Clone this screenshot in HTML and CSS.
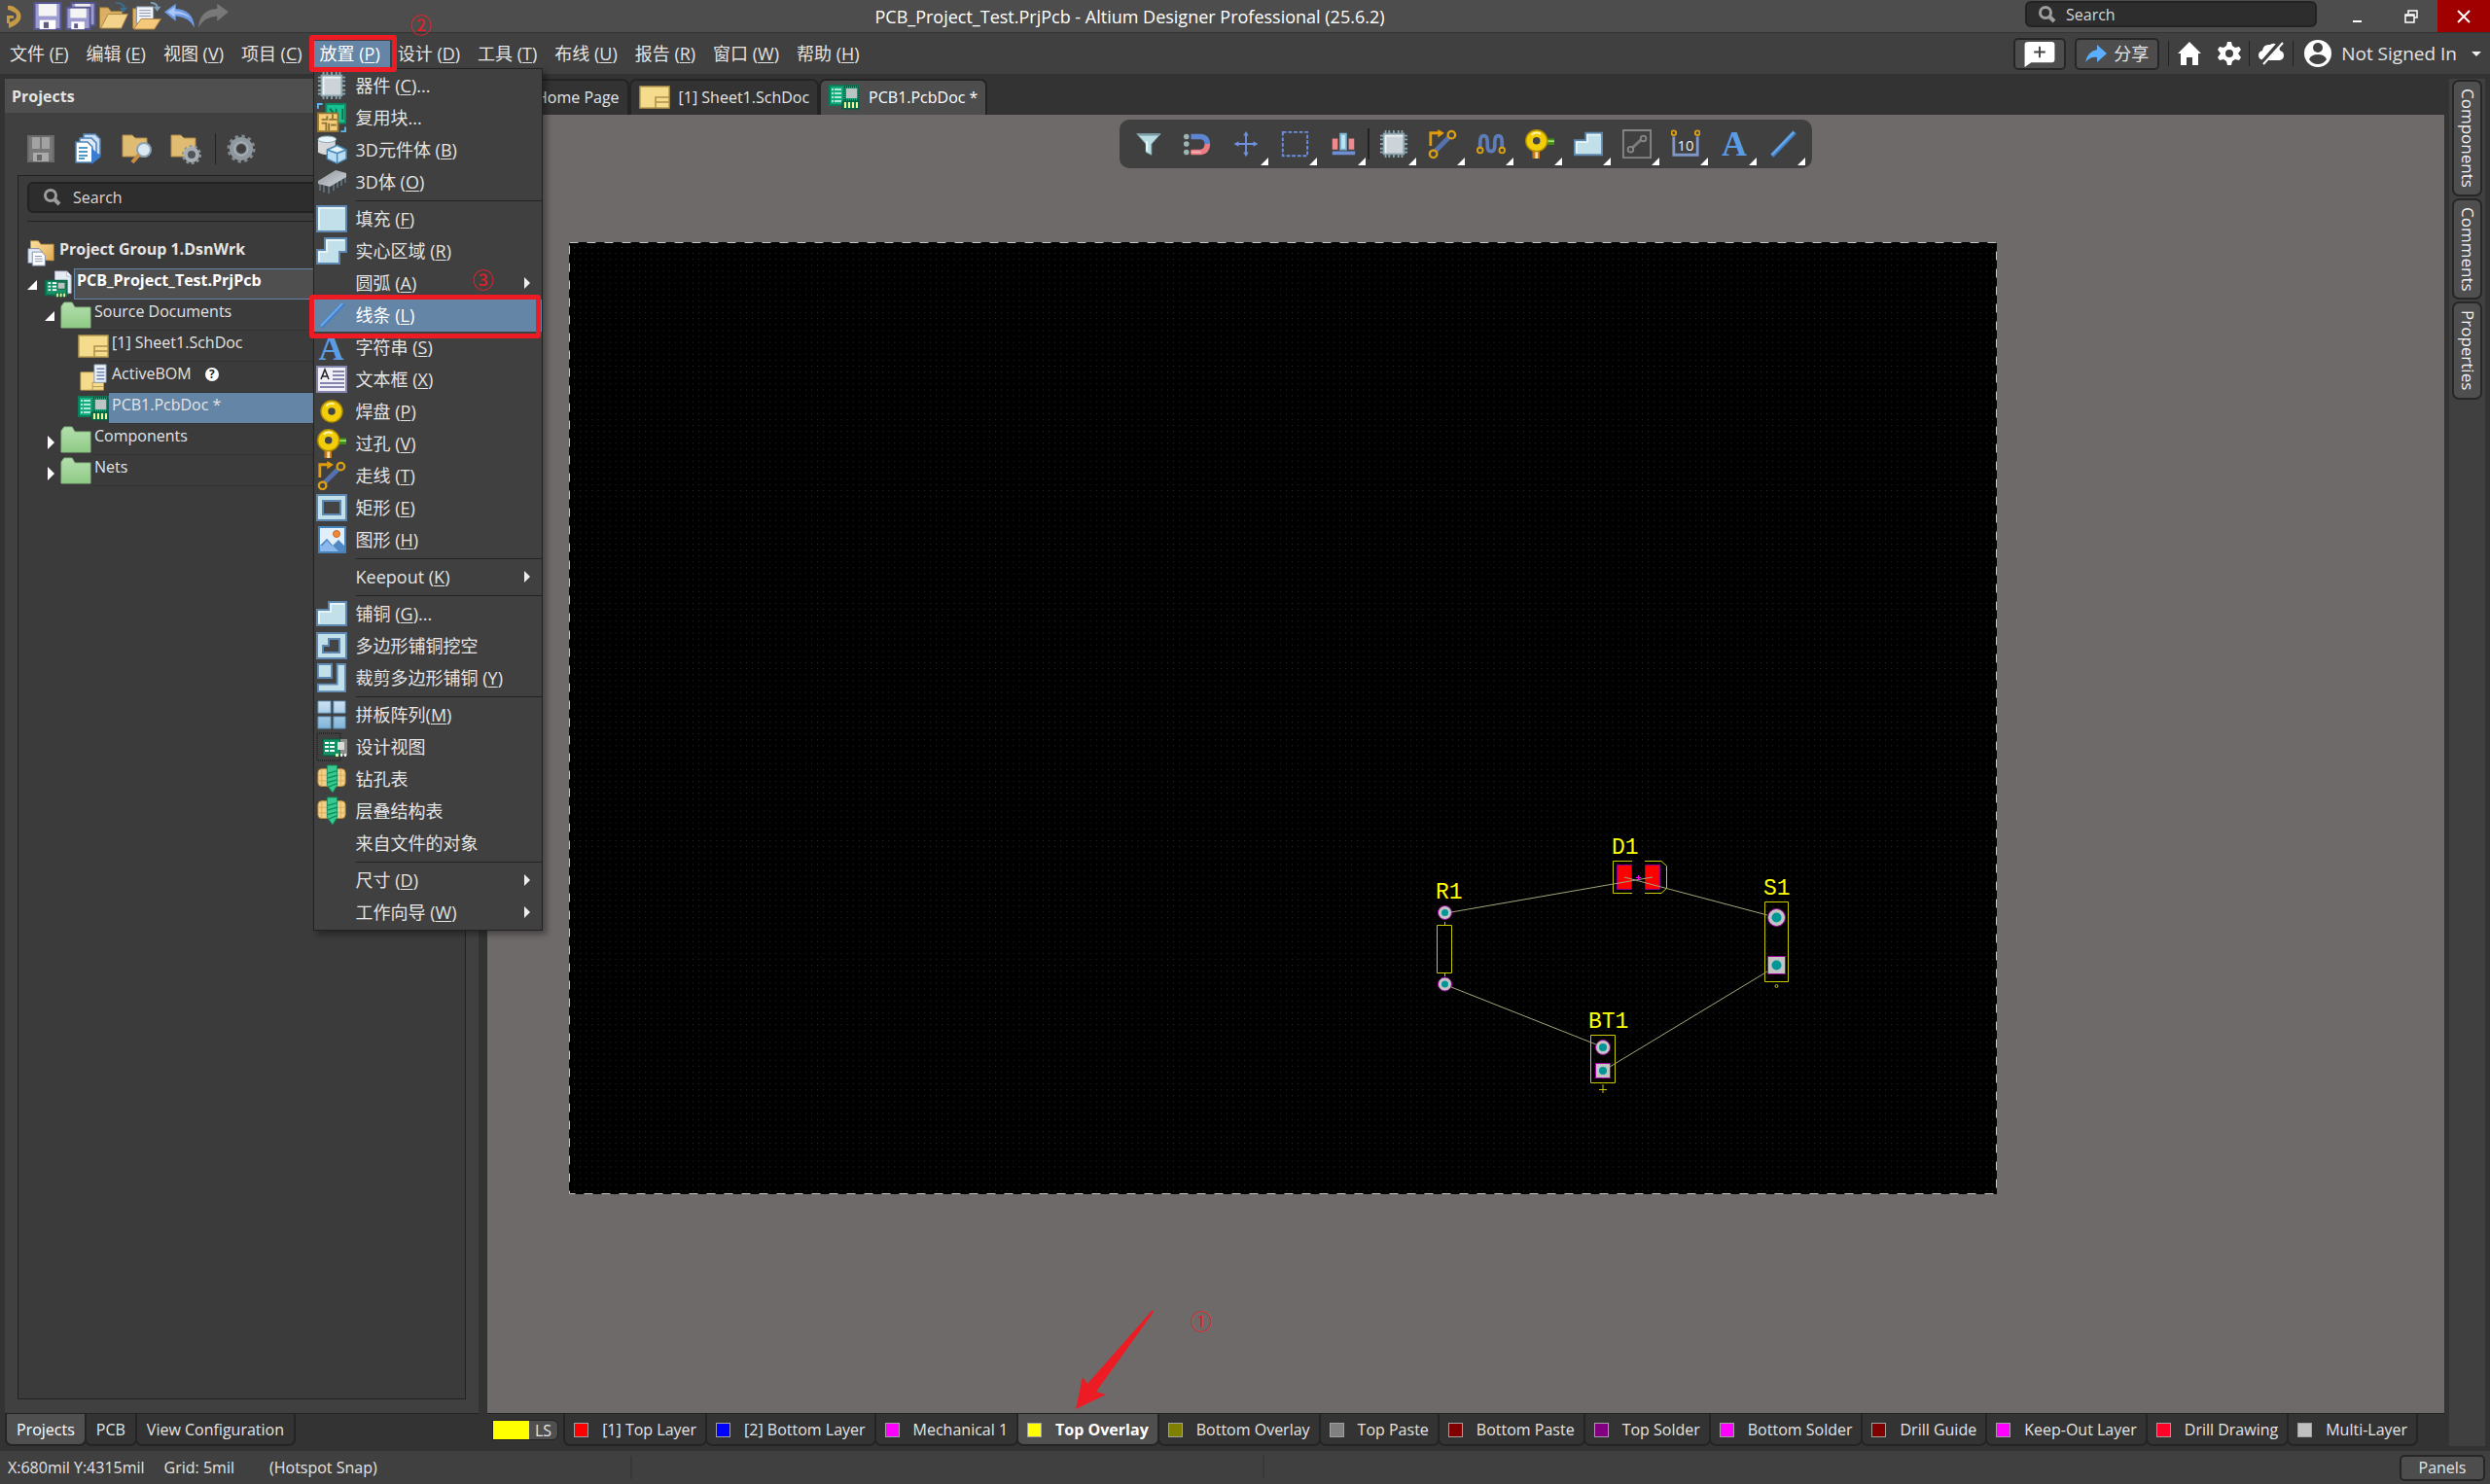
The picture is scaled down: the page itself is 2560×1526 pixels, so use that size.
FILE: index.html
```html
<!DOCTYPE html>
<html lang="zh-CN">
<head>
<meta charset="utf-8">
<title>PCB_Project_Test.PrjPcb - Altium Designer Professional (25.6.2)</title>
<link rel="stylesheet" href="styles.css">
</head>
<body>
<svg class="sprite" aria-hidden="true">
  <defs>
    <linearGradient id="gold" x1="0" y1="0" x2="1" y2="1"><stop offset="0" stop-color="#fbe3a4"/><stop offset="1" stop-color="#e0a84e"/></linearGradient>
    <linearGradient id="green" x1="0" y1="0" x2="0" y2="1"><stop offset="0" stop-color="#b4dfae"/><stop offset="1" stop-color="#8fcb85"/></linearGradient>
    <linearGradient id="sky" x1="0" y1="0" x2="0" y2="1"><stop offset="0" stop-color="#cfe2f2"/><stop offset="1" stop-color="#7fb4d8"/></linearGradient>
    <linearGradient id="steel" x1="0" y1="0" x2="1" y2="1"><stop offset="0" stop-color="#8d949b"/><stop offset="1" stop-color="#d3d8dc"/></linearGradient>
  </defs>
  <symbol id="i-logo" viewBox="0 0 16 26"><path d="M1 2 Q6 1 10 5 Q16 9 14 16 Q11 22 2 25 V19 Q9 17 10 13 Q10 9 6 8 Q3 6 1 6Z" fill="#c59a45"/><path d="M0 12h7v3H3v5H0z" fill="#c59a45"/></symbol>
  <symbol id="i-floppy" viewBox="0 0 28 28"><path d="M1 1h26v26H1z" fill="#9d9cd0" stroke="#56558f" stroke-width="2"/><path d="M5 2h18v12H5z" fill="#f4f4f4"/><path d="M6 18h16v9H6z" fill="#fff"/><path d="M10 20h5v6h-5z" fill="#5b5b86"/></symbol>
  <symbol id="i-floppy2" viewBox="0 0 32 30"><path d="M6 1h25v24H6z" fill="#9d9cd0" stroke="#56558f" stroke-width="2"/><path d="M10 2h16v4H10z" fill="#eee"/><path d="M1 6h25v23H1z" fill="#9d9cd0" stroke="#56558f" stroke-width="2"/><path d="M5 7h17v10H5z" fill="#f4f4f4"/><path d="M6 21h14v8H6z" fill="#fff"/><path d="M9 23h4v5H9z" fill="#5b5b86"/></symbol>
  <symbol id="i-open" viewBox="0 0 32 30"><path d="M1 28V6h9l3 4h12v6" fill="#d9b064" stroke="#9c7837"/><path d="M2 28 L10 13 H31 L24 28Z" fill="#f3d28b" stroke="#a98545"/><path d="M18 1 Q27 1 27 7" fill="none" stroke="#3d6d8f" stroke-width="2"/><path d="M22 6h9l-5 5z" fill="#3d6d8f"/></symbol>
  <symbol id="i-opendoc" viewBox="0 0 32 30"><path d="M1 28V7h7v21" fill="#d9b064" stroke="#9c7837"/><path d="M5 5h18v18H5z" fill="#f2f5fa" stroke="#7b89a5"/><path d="M8 9h12M8 12h12M8 15h12" stroke="#8592ad"/><path d="M2 29 L10 18 H31 L24 29Z" fill="#f6c87c" stroke="#a9803f"/><path d="M20 1 Q27 1 27 6" fill="none" stroke="#7da0b5" stroke-width="2"/><path d="M23 5h8l-4 5z" fill="#7da0b5"/></symbol>
  <symbol id="i-undo" viewBox="0 0 30 24"><path d="M0 8 L11 0 V5 Q28 6 29 23 Q24 13 11 12 V17Z" fill="#6f9be4"/><path d="M3 8 L10 3 V7 Q21 8 25 14 Q19 10 10 10 V13Z" fill="#a9c6f5"/></symbol>
  <symbol id="i-redo" viewBox="0 0 30 24"><path d="M30 8 L19 0 V5 Q2 6 1 23 Q6 13 19 12 V17Z" fill="#787878"/></symbol>
  <symbol id="i-floppyoff" viewBox="0 0 28 28"><path d="M1 1h26v26H1z" fill="#787878" stroke="#6a6a6a" stroke-width="2"/><path d="M5 2h18v12H5z" fill="#a2a2a2"/><path d="M13 2h2v12h-2z" fill="#777"/><path d="M6 18h16v9H6z" fill="#aaa"/><path d="M10 20h5v6h-5z" fill="#666"/></symbol>
  <symbol id="i-docs" viewBox="0 0 28 32"><path d="M9 1h12l5 5v16H9z" fill="#c9dcf0" stroke="#4f83b5" stroke-width="1.5"/><path d="M5 5h12l5 5v16H5z" fill="#dfeaf6" stroke="#4f83b5" stroke-width="1.5"/><path d="M1 9h12l5 5v16H1z" fill="#fff" stroke="#4f83b5" stroke-width="1.5"/><path d="M4 15h9M4 19h9M4 23h9M4 26h6" stroke="#4e9ac9" stroke-width="2"/><path d="M17 15 L27 24 L17 32Z" fill="#3a7dd0"/></symbol>
  <symbol id="i-folder-find" viewBox="0 0 32 32"><path d="M1 24V2h10l3 3h12v19z" fill="#e0bb72" stroke="#b08b49"/><circle cx="23" cy="17" r="7" fill="#dbe9f3" stroke="#8ba2b5" stroke-width="2"/><path d="M18 22 L11 30" stroke="#c68f45" stroke-width="4"/></symbol>
  <symbol id="i-folder-gear" viewBox="0 0 32 32"><path d="M1 24V2h10l3 3h12v19z" fill="#e0bb72" stroke="#b08b49"/><circle cx="22" cy="22" r="9" fill="none" stroke="#8e979d" stroke-width="2" stroke-dasharray="3 2.65"/><circle cx="22" cy="22" r="6" fill="#505559" stroke="#a6afb5" stroke-width="4"/></symbol>
  <symbol id="i-gear" viewBox="0 0 32 32"><circle cx="16" cy="16" r="13" fill="none" stroke="#7f898f" stroke-width="3" stroke-dasharray="3.4 3.4"/><circle cx="16" cy="16" r="8.500" fill="#3f3f3f" stroke="#8e989e" stroke-width="7"/><circle cx="16" cy="16" r="7" fill="none" stroke="#b3bdc3" stroke-width="1"/></symbol>
  <symbol id="i-search" viewBox="0 0 18 18"><circle cx="7" cy="7" r="5.500" fill="none" stroke="#9d9d9d" stroke-width="3"/><path d="M11 11 L16 16" stroke="#9d9d9d" stroke-width="4"/></symbol>
  <symbol id="i-group" viewBox="0 0 32 32"><path d="M4 24V2h9l3 4h15v19z" fill="url(#gold)" stroke="#c08f44"/><path d="M1 11h13l3 3v14H1z" fill="#e4ebf5" stroke="#7387a8"/><path d="M6 15h11l4 4v12H6z" fill="#fff" stroke="#7387a8"/><path d="M9 20h8M9 23h9M9 26h9" stroke="#7387a8"/></symbol>
  <symbol id="i-prj" viewBox="0 0 32 32"><path d="M12 1h14l5 5v21H12z" fill="#e6eaf4" stroke="#a9b1c6"/><path d="M26 1v6h5" fill="#fff" stroke="#a9b1c6"/><path d="M1 12h25v17H1z" fill="#19946a" stroke="#0d6a4a" stroke-width="2"/><path d="M4 15h3M4 19h3M4 23h3M9 15h5M9 19h5M9 23h5" stroke="#fff" stroke-width="2"/><path d="M15 14h9v8h-9z" fill="#b9c4c2" stroke="#0c5b40"/><path d="M12 26h14v5H12z" fill="#0f7a54"/><path d="M15 27v4M19 27v4M23 27v4" stroke="#f5f39a" stroke-width="2"/></symbol>
  <symbol id="i-folder" viewBox="0 0 32 28"><path d="M1 27V5 L4 1h8l3 5h16v21z" fill="url(#green)" stroke="#87ba80"/></symbol>
  <symbol id="i-sch" viewBox="0 0 32 24"><path d="M1 1h30v22H1z" fill="#f5dc8c" stroke="#b89a52" stroke-width="1.500"/><path d="M17 23V12h14M17 17h14" fill="none" stroke="#b08f4b" stroke-width="1.500"/></symbol>
  <symbol id="i-bom" viewBox="0 0 32 32"><path d="M1 10h27v21H1z" fill="#f5dc8c" stroke="#b89a52"/><path d="M15 31V22h13M15 27h13" fill="none" stroke="#b08f4b"/><path d="M17 1h14v21H17z" fill="#eaf1fa" stroke="#7f93b1"/><path d="M20 6h9M20 10h9M20 14h9M20 18h9" stroke="#6e86ab" stroke-width="1.500"/></symbol>
  <symbol id="i-pcb" viewBox="0 0 32 26"><path d="M1 1h30v20H1z" fill="#14ad80" stroke="#0c7c59" stroke-width="2"/><path d="M3 5h2M3 9h2M3 13h2M3 17h2M6 5h7M6 9h7M6 13h7M6 17h7" stroke="#d9fff0" stroke-width="1.500"/><path d="M16 2h15v14H16z" fill="none" stroke="#07593f" stroke-width="3" stroke-dasharray="1 1"/><path d="M18 4h11v10H18z" fill="#bac5c4"/><path d="M14 17h17v8H14z" fill="#087a54" stroke="#05543a"/><path d="M17 18v6M21 18v6M25 18v6M29 18v6" stroke="#f6f29b" stroke-width="2"/></symbol>
  <symbol id="i-chip" viewBox="0 0 32 32"><path d="M7 1v30M11 1v30M16 1v30M21 1v30M25 1v30M1 7h30M1 11h30M1 16h30M1 21h30M1 25h30" stroke="#8aa4ae" stroke-width="2"/><path d="M5 5h22v22H5z" fill="#ccd4da" stroke="#8aa4ae" stroke-width="2"/><path d="M7 26V7h19" fill="none" stroke="#eef2f4" stroke-width="2"/></symbol>
  <symbol id="i-reuse" viewBox="0 0 32 32"><path d="M10 1h21v21H10z" fill="#15c191" stroke="#0c8a62" stroke-width="2"/><path d="M14 6l4 5v6M21 6v9M28 6v12" stroke="#0a6d4d" stroke-width="2" fill="none"/><path d="M1 6V1h5M26 31h5v-5" fill="none" stroke="#5db7ee" stroke-width="2"/><path d="M1 11h22v20H1z" fill="#f4cc7a" stroke="#8f7434" stroke-width="2"/><path d="M5 18h6v-4M5 22h5v8M13 18h9M13 22v8M15 24h6M17 12v5" fill="none" stroke="#8f7434" stroke-width="2"/></symbol>
  <symbol id="i-body3d" viewBox="0 0 32 32"><path d="M1 4v15q9 5 19 0V4z" fill="#d8d8da"/><ellipse cx="11" cy="4.500" rx="10" ry="3.500" fill="#e9f5fa" stroke="#7fa3b5"/><path d="M11 16 L22 11 L32 16 V26 L22 31 L11 26Z" fill="#b8dcf2" stroke="#4a86b0" stroke-width="1.500"/><path d="M11 16 L22 20 L32 16 M22 20V31" fill="none" stroke="#4a86b0" stroke-width="1.500"/><path d="M14 16l8-3 7 3-7 2z" fill="#e6f4fc"/></symbol>
  <symbol id="i-ic3d" viewBox="0 0 32 28"><path d="M4 16v7M8 18v7M13 19v7M18 16v7M22 13v7M26 11v7M30 7v8" stroke="#5c6b78" stroke-width="2"/><path d="M2 13 L20 2 L31 5 V9 L14 19 L2 16Z" fill="url(#steel)"/></symbol>
  <symbol id="i-fill" viewBox="0 0 32 28"><path d="M1 1h30v26H1z" fill="#c2e0ea" stroke="#5d87ae" stroke-width="2"/><path d="M3 25V3h26" fill="none" stroke="#e6f4f8" stroke-width="2"/></symbol>
  <symbol id="i-region" viewBox="0 0 32 28"><path d="M9 1h22v14h-7v12H1V13h8z" fill="#c2e0ea" stroke="#5d87ae" stroke-width="2"/><path d="M3 25V15h8V3h18" fill="none" stroke="#e6f4f8" stroke-width="2"/></symbol>
  <symbol id="i-line" viewBox="0 0 32 32"><path d="M4 29 L29 3" stroke="#3f7fc7" stroke-width="5"/><path d="M4 28 L28 3" stroke="#6ba6ea" stroke-width="2.500"/></symbol>
  <symbol id="i-textbox" viewBox="0 0 32 28"><path d="M1 1h30v26H1z" fill="#f0f0f6" stroke="#8586ae" stroke-width="2"/><path d="M5 14 L9 4 L13 14M6 11h6" fill="none" stroke="#222" stroke-width="1.500"/><path d="M17 6h12M17 10h12M17 14h12M4 18h25M4 22h25" stroke="#8586ae" stroke-width="2"/></symbol>
  <symbol id="i-pad" viewBox="0 0 32 32"><circle cx="16" cy="16" r="8" fill="none" stroke="#b08c00" stroke-width="9"/><circle cx="16" cy="16" r="7.500" fill="#444" stroke="#f1cd0a" stroke-width="7"/><path d="M10 10q4-4 9-2" stroke="#fff3b0" stroke-width="2" fill="none"/></symbol>
  <symbol id="i-via" viewBox="0 0 32 32"><path d="M20 10h12v7H20z" fill="#3e8f11"/><path d="M20 12h12v2H20z" fill="#9bdf6e"/><path d="M8 20h8v12H8z" fill="#c87716"/><path d="M11 20h3v12h-3z" fill="#ffdda4"/><circle cx="12.500" cy="12.500" r="8" fill="none" stroke="#b08c00" stroke-width="9"/><circle cx="12.500" cy="12.500" r="7.500" fill="#444" stroke="#f1cd0a" stroke-width="7"/><path d="M7 6q5-4 10-1" stroke="#fff3b0" stroke-width="2" fill="none"/></symbol>
  <symbol id="i-track" viewBox="0 0 32 32"><path d="M8 24 L24 8" stroke="#5572ad" stroke-width="5"/><path d="M3 18V4h11" fill="none" stroke="#e29c0a" stroke-width="3"/><path d="M11 0v9l7-5z" fill="#e29c0a"/><circle cx="26" cy="6" r="4" fill="#444" stroke="#dba012" stroke-width="2.500"/><circle cx="6" cy="27" r="4" fill="#444" stroke="#dba012" stroke-width="2.500"/></symbol>
  <symbol id="i-rect" viewBox="0 0 32 28"><path d="M1 1h30v26H1z" fill="#c2e0ea" stroke="#5d87ae" stroke-width="2"/><path d="M7 7h18v14H7z" fill="#444" stroke="#5d87ae" stroke-width="2"/></symbol>
  <symbol id="i-image" viewBox="0 0 32 30"><path d="M3 2h27v26H3z" fill="#e2effa" stroke="#4683bd" stroke-width="2"/><circle cx="21" cy="9" r="3.500" fill="#f08a3a" stroke="#c9662a"/><path d="M4 27V21l7-7 12 13z" fill="#8cb8ec"/><path d="M4 21l7-7 6 7 6-6 6 6v6H23l-6-6" fill="#4f88c2"/><path d="M4 24l7-8 11 11H4z" fill="#8cb8ec"/></symbol>
  <symbol id="i-pour" viewBox="0 0 32 26"><path d="M13 1h18v24H1V9h12z" fill="#c2e0ea" stroke="#5d87ae" stroke-width="2"/><path d="M3 23V11h12V3h14" fill="none" stroke="#e6f4f8" stroke-width="2"/></symbol>
  <symbol id="i-cutout" viewBox="0 0 32 28"><path d="M1 1h30v26H1z" fill="#c2e0ea" stroke="#5d87ae" stroke-width="2"/><path d="M13 7h11v14H7v-7h6z" fill="#444" stroke="#5d87ae" stroke-width="2"/></symbol>
  <symbol id="i-slice" viewBox="0 0 32 32"><path d="M1 1h15v15H1zM22 1h9v30H1v-8h21z" fill="#c2e0ea" stroke="#5d87ae" stroke-width="2"/></symbol>
  <symbol id="i-array" viewBox="0 0 32 32"><path d="M1 1h14v13H1zM18 1h13v13H18zM1 18h14v13H1zM18 18h13v13H18z" fill="url(#sky)" stroke="#5d8fb8"/></symbol>
  <symbol id="i-dview" viewBox="0 0 32 30"><path d="M1 1h24v28H1z" fill="none" stroke="#111" stroke-dasharray="1 1"/><path d="M7 7h18v17H7z" fill="#129264" stroke="#07593f"/><path d="M25 7h7v17h-7z" fill="#8c8c8c"/><path d="M9 11h4M9 15h4M9 19h4M14 11h5M14 15h5M14 19h5" stroke="#fff" stroke-width="2"/><path d="M22 10h7v8h-7z" fill="#dadada"/><path d="M20 22h3v3h-3z" fill="#ef8"/><path d="M25 22h2v3h-2zM29 22h2v3h-2z" fill="#eee"/></symbol>
  <symbol id="i-drill" viewBox="0 0 32 32"><rect x="1" y="5" width="30" height="19" rx="4" fill="#f0cf8c" stroke="#c28d32"/><path d="M5 5v19M1 12h30M1 18h30M26 5v19" stroke="#d9ae5e"/><path d="M11 1h11v22l-5 8-6-8z" fill="#37c990" stroke="#108a5b"/><path d="M11 10l11-3M11 15l11-3M11 20l11-3M12 25l10-4" stroke="#128c5e" stroke-width="1.500"/></symbol>
  <symbol id="i-filter" viewBox="0 0 32 32"><path d="M3 5h26L19 16v12l-6-3V16z" fill="#b9dde3" stroke="#7fa7b0"/><path d="M4 6h24" stroke="#7f9aa5" stroke-width="2"/><path d="M14 13v11" stroke="#effafc" stroke-width="2"/></symbol>
  <symbol id="i-magnet" viewBox="0 0 32 32"><path d="M9 8h11q7 1 7 8" fill="none" stroke="#5e84d4" stroke-width="6"/><path d="M9 25h11q7-1 7-9" fill="none" stroke="#ea7d83" stroke-width="6"/><path d="M9 25h11" stroke="#f8b0b2" stroke-width="2"/><circle cx="4" cy="8" r="3" fill="#9ab5b4"/><circle cx="4" cy="16" r="3" fill="#9ab5b4"/><circle cx="4" cy="25" r="3" fill="#9ab5b4"/></symbol>
  <symbol id="i-move" viewBox="0 0 32 32"><path d="M16 4v24M4 16h24" stroke="#6f90df" stroke-width="2"/><path d="M16 2l3 5h-6zM16 30l3-5h-6zM3 16l5-3v6zM29 16l-5-3v6z" fill="#6f90df"/></symbol>
  <symbol id="i-select" viewBox="0 0 32 32"><path d="M3 3h27v26H3z" fill="none" stroke="#6f90df" stroke-width="2" stroke-dasharray="4 2"/></symbol>
  <symbol id="i-align" viewBox="0 0 32 32"><path d="M4 10h6v12H4zM22 10h6v12h-6z" fill="#f0898c"/><path d="M13 5h6v17h-6z" fill="#bfe4f4" stroke="#7db7d4" stroke-width="2"/><path d="M4 26h25" stroke="#6d8fd2" stroke-width="4"/></symbol>
  <symbol id="i-meander" viewBox="0 0 32 32"><path d="M4 22V14q0-7 4-7t4 7v4q0 6 4 6t4-6v-4q0-7 4-7t4 7v8" fill="none" stroke="#5d7cb8" stroke-width="4"/><circle cx="4" cy="23" r="3" fill="#444" stroke="#dba012" stroke-width="2"/><circle cx="28" cy="23" r="3" fill="#444" stroke="#dba012" stroke-width="2"/></symbol>
  <symbol id="i-boxed" viewBox="0 0 32 32"><path d="M1 1h30v30H1z" fill="none" stroke="#858585" stroke-width="2"/><path d="M9 22 L22 10" stroke="#7a7a7a" stroke-width="3"/><circle cx="23" cy="10" r="3" fill="#444" stroke="#858585" stroke-width="2"/><circle cx="9" cy="22" r="3" fill="#444" stroke="#858585" stroke-width="2"/></symbol>
  <symbol id="i-comment" viewBox="0 0 32 28"><path d="M4 1h25q3 0 3 3v16q0 3-3 3H7l-7 5V4q0-3 4-3z" fill="#fff"/><path d="M16 6v12M10 12h12" stroke="#444" stroke-width="2"/></symbol>
  <symbol id="i-share" viewBox="0 0 22 18"><path d="M22 9 L12 0v5Q2 7 0 18q5-6 12-5v5z" fill="#5caeff"/></symbol>
  <symbol id="i-home" viewBox="0 0 24 24"><path d="M12 0 L24 12 H21 V24 H15 V16 H9 V24 H3 V12 H0Z" fill="#fff"/></symbol>
  <symbol id="i-cog" viewBox="0 0 24 24"><path d="M10 0h4l1 4 3 2 4-1 2 3-3 4 3 4-2 3-4-1-3 2-1 4h-4l-1-4-3-2-4 1-2-3 3-4-3-4 2-3 4 1 3-2z" fill="#fff"/><circle cx="12" cy="12" r="4" fill="#404040"/></symbol>
  <symbol id="i-cloud" viewBox="0 0 26 24"><path d="M5 19q-5-1-5-5 0-4 4-5 1-7 8-6 4-3 8 1 2 2 2 5 4 1 4 5t-4 5z" fill="#fff"/><path d="M3 23 L23 0" stroke="#404040" stroke-width="5"/><path d="M5 23 L25 1" stroke="#fff" stroke-width="2"/></symbol>
  <symbol id="i-user" viewBox="0 0 28 28"><circle cx="14" cy="14" r="14" fill="#fff"/><circle cx="14" cy="8" r="5" fill="#404040"/><path d="M5 20q2-5 9-5t9 5q-3 5-9 5t-9-5z" fill="#404040"/></symbol>
  <symbol id="i-restore" viewBox="0 0 14 14"><path d="M4 4V1h9v7h-3M1 5h9v8H1zM1 6h9" fill="none" stroke="#fff" stroke-width="1.500"/></symbol>
  <symbol id="i-close" viewBox="0 0 14 14"><path d="M1 1l12 12M13 1L1 13" stroke="#fff" stroke-width="2"/></symbol>
</svg>

<div class="app">
  <header class="titlebar">
    <div class="quick">
      <svg class="logo"><use href="#i-logo"/></svg>
      <button aria-label="Save"><svg><use href="#i-floppy"/></svg></button>
      <button aria-label="Save all"><svg><use href="#i-floppy2"/></svg></button>
      <button aria-label="Open"><svg><use href="#i-open"/></svg></button>
      <button aria-label="Open project"><svg><use href="#i-opendoc"/></svg></button>
      <button aria-label="Undo"><svg><use href="#i-undo"/></svg></button>
      <button aria-label="Redo"><svg><use href="#i-redo"/></svg></button>
    </div>
    <h1 class="title">PCB_Project_Test.PrjPcb - Altium Designer Professional (25.6.2)</h1>
    <label class="search search-top"><svg><use href="#i-search"/></svg><input type="search" placeholder="Search" aria-label="Search"></label>
    <div class="winbtns">
      <button aria-label="Minimize"><span class="min"></span></button>
      <button aria-label="Restore"><svg><use href="#i-restore"/></svg></button>
      <button class="close" aria-label="Close"><svg><use href="#i-close"/></svg></button>
    </div>
  </header>

  <nav class="menubar">
    <ul class="menus">
      <li><button>文件 (<u>F</u>)</button></li>
      <li><button>编辑 (<u>E</u>)</button></li>
      <li><button>视图 (<u>V</u>)</button></li>
      <li><button>项目 (<u>C</u>)</button></li>
      <li class="open"><button>放置 (<u>P</u>)</button>
        <ul class="popup">
          <li><button><svg><use href="#i-chip"/></svg>器件 (<u>C</u>)...</button></li>
          <li><button><svg><use href="#i-reuse"/></svg>复用块...</button></li>
          <li><button><svg><use href="#i-body3d"/></svg>3D元件体 (<u>B</u>)</button></li>
          <li><button><svg><use href="#i-ic3d"/></svg>3D体 (<u>O</u>)</button></li>
          <li class="rule"></li>
          <li><button><svg><use href="#i-fill"/></svg>填充 (<u>F</u>)</button></li>
          <li><button><svg><use href="#i-region"/></svg>实心区域 (<u>R</u>)</button></li>
          <li><button class="sub"><svg></svg>圆弧 (<u>A</u>)</button></li>
          <li><button class="hot"><svg><use href="#i-line"/></svg>线条 (<u>L</u>)</button></li>
          <li><button><span class="glyph-a">A</span>字符串 (<u>S</u>)</button></li>
          <li><button><svg><use href="#i-textbox"/></svg>文本框 (<u>X</u>)</button></li>
          <li><button><svg><use href="#i-pad"/></svg>焊盘 (<u>P</u>)</button></li>
          <li><button><svg><use href="#i-via"/></svg>过孔 (<u>V</u>)</button></li>
          <li><button><svg><use href="#i-track"/></svg>走线 (<u>T</u>)</button></li>
          <li><button><svg><use href="#i-rect"/></svg>矩形 (<u>E</u>)</button></li>
          <li><button><svg><use href="#i-image"/></svg>图形 (<u>H</u>)</button></li>
          <li class="rule"></li>
          <li><button class="sub"><svg></svg>Keepout (<u>K</u>)</button></li>
          <li class="rule"></li>
          <li><button><svg><use href="#i-pour"/></svg>铺铜 (<u>G</u>)...</button></li>
          <li><button><svg><use href="#i-cutout"/></svg>多边形铺铜挖空</button></li>
          <li><button><svg><use href="#i-slice"/></svg>裁剪多边形铺铜 (<u>Y</u>)</button></li>
          <li class="rule"></li>
          <li><button><svg><use href="#i-array"/></svg>拼板阵列(<u>M</u>)</button></li>
          <li><button><svg><use href="#i-dview"/></svg>设计视图</button></li>
          <li><button><svg><use href="#i-drill"/></svg>钻孔表</button></li>
          <li><button><svg><use href="#i-drill"/></svg>层叠结构表</button></li>
          <li><button><svg></svg>来自文件的对象</button></li>
          <li class="rule"></li>
          <li><button class="sub"><svg></svg>尺寸 (<u>D</u>)</button></li>
          <li><button class="sub"><svg></svg>工作向导 (<u>W</u>)</button></li>
        </ul>
        <span class="mark mark-menu"></span>
        <span class="mark mark-item"></span>
        <span class="step step-2">②</span>
        <span class="step step-3">③</span>
      </li>
      <li><button>设计 (<u>D</u>)</button></li>
      <li><button>工具 (<u>T</u>)</button></li>
      <li><button>布线 (<u>U</u>)</button></li>
      <li><button>报告 (<u>R</u>)</button></li>
      <li><button>窗口 (<u>W</u>)</button></li>
      <li><button>帮助 (<u>H</u>)</button></li>
    </ul>
    <div class="account">
      <button class="raised comment" aria-label="Comment"><svg><use href="#i-comment"/></svg></button>
      <button class="raised share"><svg><use href="#i-share"/></svg>分享</button>
      <span class="vline"></span>
      <button aria-label="Home"><svg class="s24"><use href="#i-home"/></svg></button>
      <button aria-label="Settings"><svg class="s24"><use href="#i-cog"/></svg></button>
      <span class="vline"></span>
      <button aria-label="Cloud"><svg class="s26"><use href="#i-cloud"/></svg></button>
      <span class="vline"></span>
      <button class="user"><svg class="s28"><use href="#i-user"/></svg>Not Signed In<span class="caret"></span></button>
    </div>
  </nav>

  <main class="work">
    <aside class="side">
      <section class="panel">
        <h2>Projects</h2>
        <div class="tools">
          <button aria-label="Save"><svg><use href="#i-floppyoff"/></svg></button>
          <button aria-label="Compile"><svg><use href="#i-docs"/></svg></button>
          <button aria-label="Find"><svg><use href="#i-folder-find"/></svg></button>
          <button aria-label="Project options"><svg><use href="#i-folder-gear"/></svg></button>
          <span class="vline"></span>
          <button aria-label="Options"><svg><use href="#i-gear"/></svg></button>
        </div>
        <div class="treebox">
          <label class="search search-side"><svg><use href="#i-search"/></svg><input type="search" placeholder="Search" aria-label="Search projects"></label>
          <ul class="tree">
            <li class="l0"><svg><use href="#i-group"/></svg><b>Project Group 1.DsnWrk</b></li>
            <li class="l1 current"><i class="down"></i><svg><use href="#i-prj"/></svg><b>PCB_Project_Test.PrjPcb</b></li>
            <li class="l2"><i class="down"></i><svg><use href="#i-folder"/></svg><span>Source Documents</span></li>
            <li class="l3"><svg><use href="#i-sch"/></svg><span>[1] Sheet1.SchDoc</span></li>
            <li class="l3"><svg><use href="#i-bom"/></svg><span>ActiveBOM <em>?</em></span></li>
            <li class="l3 selected"><svg><use href="#i-pcb"/></svg><span>PCB1.PcbDoc *</span></li>
            <li class="l2"><i class="right"></i><svg><use href="#i-folder"/></svg><span>Components</span></li>
            <li class="l2"><i class="right"></i><svg><use href="#i-folder"/></svg><span>Nets</span></li>
          </ul>
        </div>
      </section>
      <div class="tabs side-tabs">
        <button class="on">Projects</button><button>PCB</button><button>View Configuration</button>
      </div>
    </aside>

    <section class="editor">
      <div class="doctabs">
        <button class="home">Home Page</button>
        <button><svg><use href="#i-sch"/></svg>[1] Sheet1.SchDoc</button>
        <button class="on"><svg><use href="#i-pcb"/></svg>PCB1.PcbDoc *</button>
      </div>
      <div class="canvas">
        <div class="toolbar">
          <button class="plain" aria-label="Filter"><svg><use href="#i-filter"/></svg></button>
          <button class="plain" aria-label="Snap"><svg><use href="#i-magnet"/></svg></button>
          <button aria-label="Move"><svg><use href="#i-move"/></svg></button>
          <button aria-label="Select"><svg><use href="#i-select"/></svg></button>
          <button aria-label="Align"><svg><use href="#i-align"/></svg></button>
          <span class="vline"></span>
          <button aria-label="Component"><svg><use href="#i-chip"/></svg></button>
          <button aria-label="Route"><svg><use href="#i-track"/></svg></button>
          <button aria-label="Tune"><svg><use href="#i-meander"/></svg></button>
          <button aria-label="Via"><svg><use href="#i-via"/></svg></button>
          <button aria-label="Polygon"><svg><use href="#i-pour"/></svg></button>
          <button aria-label="Keepout"><svg><use href="#i-boxed"/></svg></button>
          <button aria-label="Dimension"><svg viewBox="0 0 32 32"><path d="M3 8v20h26V8" fill="none" stroke="#8096c8" stroke-width="3"/><circle cx="3" cy="4" r="2.500" fill="#444" stroke="#dba012" stroke-width="2"/><circle cx="29" cy="4" r="2.500" fill="#444" stroke="#dba012" stroke-width="2"/><text class="dim" x="16" y="23" text-anchor="middle">10</text></svg></button>
          <button aria-label="String"><span class="glyph-a">A</span></button>
          <button aria-label="Line"><svg><use href="#i-line"/></svg></button>
        </div>
        <svg class="board" width="1468" height="980" viewBox="585 248 1468 980">
          <defs><pattern id="grid" x="590" y="254" width="6.100" height="6.100" patternUnits="userSpaceOnUse"><rect width="1" height="1" fill="#2c2c2c"/></pattern></defs>
          <rect x="585" y="249" width="1468" height="979" fill="#000"/>
          <rect x="588" y="252" width="1462" height="974" fill="url(#grid)"/>
          <rect x="585.500" y="249.500" width="1467" height="978" fill="none" stroke="#c4c4c4" stroke-dasharray="9 9"/>
          <g class="silk">
            <path d="M1477.500 951.500h15v49h-15zM1485.500 948v3M1485.500 1001v3"/>
            <path d="M1678 885.500h-19.500v33H1678M1691 885.500h17l5.500 5v23l-5.500 5h-17"/>
            <path d="M1814.500 927.500h24v82h-24z"/><circle cx="1826.500" cy="1014" r="1.500"/>
            <path d="M1635.500 1064.500h25v49h-25zM1648 1115v9M1644 1120.500h8"/>
          </g>
          <g class="smd"><path d="M1662.500 889.500h15v25h-15zM1691.500 889.500h15v25h-15z"/></g>
          <g class="pad">
            <circle cx="1485.500" cy="938.500" r="7"/><circle cx="1485.500" cy="1012" r="7"/>
            <circle cx="1648" cy="1077" r="7.500"/><circle cx="1826.500" cy="943.500" r="9"/>
            <path d="M1640.500 1093.500h15v15h-15zM1817.500 983.500h18v18h-18z"/>
          </g>
          <g class="net"><path d="M1492 938L1699 902M1670 902L1817 941M1492 1015L1641 1074M1655 1097L1817 999"/></g>
          <g class="hole">
            <circle cx="1485.500" cy="938.500" r="3.500"/><circle cx="1485.500" cy="1012" r="3.500"/>
            <circle cx="1648" cy="1077" r="4"/><circle cx="1648" cy="1101" r="4"/>
            <circle cx="1826.500" cy="943.500" r="5"/><circle cx="1826.500" cy="992.500" r="5"/>
          </g>
          <path d="M1684.500 900v5M1682 902.500h5" stroke="#f0f"/>
          <g class="refdes"><text x="1476" y="924">R1</text><text x="1657" y="878">D1</text><text x="1813" y="920">S1</text><text x="1633" y="1057">BT1</text></g>
        </svg>
        <svg class="pointer" width="80" height="102" viewBox="1106 1348 80 102"><path d="M1185 1348L1186 1350 1127 1432 1137 1435 1106 1450 1113 1417 1118 1424Z" fill="#ed1c24"/></svg>
        <span class="step step-1">①</span>
      </div>
      <div class="tabs layer-tabs">
        <button class="ls"><span></span>LS</button>
        <button><i class="c-red"></i>[1] Top Layer</button>
        <button><i class="c-blue"></i>[2] Bottom Layer</button>
        <button><i class="c-magenta"></i>Mechanical 1</button>
        <button class="on"><i class="c-yellow"></i>Top Overlay</button>
        <button><i class="c-olive"></i>Bottom Overlay</button>
        <button><i class="c-gray"></i>Top Paste</button>
        <button><i class="c-maroon"></i>Bottom Paste</button>
        <button><i class="c-purple"></i>Top Solder</button>
        <button><i class="c-magenta"></i>Bottom Solder</button>
        <button><i class="c-maroon"></i>Drill Guide</button>
        <button><i class="c-magenta"></i>Keep-Out Layer</button>
        <button><i class="c-crimson"></i>Drill Drawing</button>
        <button><i class="c-silver"></i>Multi-Layer</button>
      </div>
    </section>

    <aside class="rail"><button>Components</button><button>Comments</button><button>Properties</button></aside>
  </main>

  <footer class="status">
    <div class="cell"><span>X:680mil Y:4315mil</span><span>Grid: 5mil</span><span>(Hotspot Snap)</span></div>
    <div class="cell"></div>
    <button class="raised">Panels</button>
  </footer>
</div>
</body>
</html>
```
FILE: styles.css
```css
* { box-sizing: border-box; }
body { margin: 0; background: #333; color: #e4e4e4; font: 16px/24px "Open Sans", "Noto Sans CJK SC", sans-serif; }
button { font: inherit; color: inherit; background: none; border: 0; padding: 0; margin: 0; display: flex; align-items: center; white-space: nowrap; }
ul { list-style: none; margin: 0; padding: 0; }
h1, h2 { margin: 0; font-size: 16px; }
u { text-underline-offset: 2px; text-decoration-thickness: 1px; }
.sprite { position: absolute; width: 0; height: 0; }
.app { display: flex; flex-direction: column; min-height: 100vh; }
.vline { width: 1px; background: #222; align-self: stretch; }

/* title bar */
.titlebar { display: flex; height: 34px; background: #4d4d4d; border-bottom: 1px solid #333; }
.quick { display: flex; width: 241px; padding-left: 6px; align-items: center; gap: 2px; }
.quick svg { width: 32px; height: 29px; display: block; }
.quick .logo { width: 18px; height: 26px; margin-right: 7px; }
.title { flex: 1; text-align: center; font-size: 18px; font-weight: 400; line-height: 34px; color: #fff; }
.search { display: flex; align-items: center; background: #2d2d2d; border: 2px solid #222; border-radius: 6px; }
.search svg { width: 18px; height: 18px; margin-right: 10px; }
.search input { flex: 1; min-width: 0; border: 0; padding: 0; background: none; font: inherit; color: #e4e4e4; outline: 0; }
.search input::placeholder { color: #d8d8d8; opacity: 1; }
.search-top { width: 300px; height: 27px; margin-top: 1px; padding-left: 12px; }
.winbtns { display: flex; margin-left: 14px; }
.winbtns button { width: 55px; justify-content: center; }
.winbtns svg { width: 14px; height: 14px; }
.winbtns .min { width: 9px; height: 2px; background: #fff; margin-top: 11px; }
.winbtns .close { background: #a00000; width: 54px; }

/* menu bar */
.menubar { display: flex; justify-content: space-between; height: 42px; background: #404040; font-size: 18px; }
.menus { display: flex; padding-left: 4px; gap: 2px; }
.menus > li { position: relative; padding-top: 8px; }
.menus > li > button { height: 27px; padding: 0 10px 2px 6px; }
.open > button { background: #6485a5; color: #fff; }
.popup { position: absolute; z-index: 5; left: -1px; top: 36px; width: 236px; padding: 1px 0; background: #404040; border: 1px solid #222; box-shadow: 4px 4px 6px rgba(0, 0, 0, .35); }
.popup button { width: 100%; height: 33px; padding: 0 0 2px 2px; }
.popup svg, .popup .glyph-a { width: 32px; height: 30px; margin-right: 9px; flex: none; }
.glyph-a { font: bold 36px/32px "Liberation Serif", serif; color: #5b9ce6; text-align: center; }
.popup .rule { height: 5px; margin-left: 43px; border-top: 2px solid #404040; background: linear-gradient(#222 1px, #404040 1px); }
.popup .hot { background: #6485a5; color: #fff; }
.popup .sub::after { content: ""; margin-left: auto; margin-right: 12px; border: 6px solid transparent; border-left: 6px solid #eee; border-right: 0; }
.mark { position: absolute; z-index: 6; border: 5px solid #ed1c24; border-radius: 3px; pointer-events: none; }
.mark-menu { left: -5px; top: 2px; width: 90px; height: 38px; }
.mark-item { left: -5px; top: 269px; width: 238px; height: 45px; }
.step { position: absolute; z-index: 6; font: 22px/24px "Noto Sans CJK SC", sans-serif; color: #ed1c24; }
.step-2 { left: 99px; top: -22px; }
.step-3 { left: 163px; top: 240px; }

.account { display: flex; align-items: center; padding-right: 9px; }
.account svg { flex: none; }
.account .vline { height: 26px; align-self: center; }
.account > button { margin: 0 0 0 9px; }
.raised { background: #4d4d4d; border: 2px solid #262626; border-radius: 5px; justify-content: center; }
.account .comment { width: 54px; height: 33px; }
.account .comment svg { width: 32px; height: 27px; }
.account .share { width: 87px; height: 33px; margin-right: 9px; gap: 7px; }
.account .share svg { width: 22px; height: 18px; }
.s24 { width: 24px; height: 24px; }
.s26 { width: 26px; height: 24px; }
.s28 { width: 28px; height: 28px; }
.account .s24 { margin-right: 8px; }
.account .s26 { margin-right: 9px; }
.account .user { margin-left: 11px; gap: 10px; font-size: 19px; }
.caret { border: 5px solid transparent; border-top-color: #eee; border-bottom: 0; margin-left: 5px; }

/* work area */
.work { flex: 1; display: flex; padding: 5px; }
.side { width: 487px; margin-right: 9px; display: flex; flex-direction: column; }
.panel { flex: 1; display: flex; flex-direction: column; background: #404040; border-bottom: 1px solid #222; padding-bottom: 14px; }
.panel h2 { height: 35px; line-height: 36px; padding-left: 7px; background: #4f4f4f; }
.tools { display: flex; align-items: center; height: 64px; padding: 10px 0 0 23px; }
.tools button { width: 50px; justify-content: center; }
.tools svg { width: 32px; height: 32px; }
.tools button:first-child { width: 32px; justify-content: flex-start; margin-right: 6px; }
.tools button:first-child svg { width: 28px; height: 28px; }
.tools .vline { height: 32px; align-self: center; margin: 0 1px 0 5px; }
.treebox { flex: 1; margin: 0 13px; border: 1px solid #222; background: #3b3b3b; }
.search-side { height: 32px; margin: 6px 9px 8px; padding-left: 15px; }
.search-side svg { margin-right: 12px; }
.tree { border-top: 1px solid #222; margin-top: 8px; padding-top: 16px; margin-left: 9px; }
.tree li { display: flex; height: 32px; align-items: center; }
.tree svg { width: 32px; height: 28px; flex: none; }
.tree b, .tree span { flex: 1; height: 32px; line-height: 24px; padding-left: 3px; border-bottom: 1px solid #333; white-space: pre; }
.tree .l0 { margin-left: -2px; }
.tree .l0 b { border: 0; }
.tree .l2 { padding-left: 18px; }
.tree .l3 { padding-left: 52px; }
.tree i { flex: none; width: 16px; height: 12px; margin-top: 4px; }
.tree i::before { content: ""; display: block; }
.tree .down::before { width: 10px; height: 10px; background: #fff; clip-path: polygon(100% 0, 100% 100%, 0 100%); }
.tree .right::before { width: 7px; height: 14px; margin-left: 3px; background: #fff; clip-path: polygon(0 0, 100% 50%, 0 100%); }
.tree .current b { background: #4f4f4f; border: 1px solid #6485a5; color: #fff; line-height: 22px; padding-left: 2px; }
.tree .selected span { background: #6485a5; }
.tree em { display: inline-block; width: 14px; height: 14px; margin-left: 10px; border-radius: 7px; background: #fff; color: #222; font: bold 12px/14px "Open Sans", sans-serif; text-align: center; vertical-align: 1px; }

/* bottom tabs */
.tabs { display: flex; height: 33px; align-items: stretch; }
.tabs button { border: 2px solid #242424; border-top: 0; border-radius: 0 0 7px 7px; padding: 0 10px; }
.tabs button + button { margin-left: -2px; }
.tabs .on { background: #4f4f4f; color: #fff; }

/* editor */
.editor { flex: 1; min-width: 0; display: flex; flex-direction: column; }
.doctabs { display: flex; height: 37px; }
.doctabs button { border: 2px solid #242424; border-bottom: 0; border-radius: 7px 7px 0 0; padding: 0 8px 2px; gap: 9px; }
.doctabs svg { width: 32px; height: 26px; }
.doctabs .home { padding-left: 48px; }
.doctabs .on { background: #4d4d4d; color: #fff; }
.canvas { flex: 1; position: relative; background: #6e6a69; border-bottom: 1px solid #222; padding: 5px 0 0; }
.toolbar { display: flex; width: max-content; height: 50px; margin: 0 auto; padding: 0 5px; background: #404040; border-radius: 10px; }
.toolbar button { width: 50px; position: relative; justify-content: center; }
.toolbar svg, .toolbar .glyph-a { width: 30px; height: 32px; }
.toolbar .vline { margin: 9px 0; width: 2px; }
.toolbar button:not(.plain)::after { content: ""; position: absolute; right: 2px; bottom: 3px; width: 8px; height: 8px; background: #fff; clip-path: polygon(100% 0, 100% 100%, 0 100%); }
.dim { font: 16px "Open Sans", sans-serif; fill: #eee; }
.board { position: absolute; left: 84px; top: 130px; }
.silk * { fill: none; stroke: #c9c900; }
.smd * { fill: #f00; stroke: #8b008b; }
.pad * { fill: #c4c4c4; stroke: #a000a0; stroke-width: 1; }
.hole * { fill: #009696; }
.net { stroke: #a5a57c; fill: none; }
.refdes { fill: #ff0; font: 23px "Liberation Mono", monospace; }
.pointer { position: absolute; left: 605px; bottom: 4px; }
.step-1 { left: 723px; bottom: 84px; }
.layer-tabs button { padding: 1px 9px 0 9px; gap: 14px; }
.layer-tabs i { width: 15px; height: 15px; border: 1px solid #a0a0a0; }
.layer-tabs .on { font-weight: 700; }
.layer-tabs .ls { align-self: center; height: 21px; margin: 0 7px 0 5px; padding: 0 6px 0 0; gap: 6px; border: 1px solid #222; border-radius: 0 6px 6px 0; background: #4f4f4f; }
.ls span { width: 37px; height: 19px; background: #ff0; }
.c-red { background: #f00; } .c-blue { background: #00f; } .c-magenta { background: #f0f; } .c-yellow { background: #ff0; }
.c-olive { background: #808000; } .c-gray { background: #808080; } .c-maroon { background: #800000; } .c-purple { background: #800080; }
.c-crimson { background: #ff0028; } .c-silver { background: #c0c0c0; }

/* right rail */
.rail { width: 37px; margin-left: 5px; background: #404040; display: flex; flex-direction: column; align-items: center; gap: 2px; padding-top: 1px; }
.rail button { writing-mode: vertical-rl; width: 31px; padding: 7px 0; justify-content: center; background: #4f4f4f; border: 2px solid #262626; border-radius: 7px; color: #f2f2f2; font-size: 17px; }

/* status bar */
.status { display: flex; align-items: center; height: 34px; background: #404040; padding: 0 5px 0 8px; }
.cell { width: 650px; height: 24px; border-right: 2px solid #383838; display: flex; }
.cell:first-child { width: 642px; }
.cell span { margin-right: 20px; }
.cell span:nth-child(2) { margin-right: 36px; }
.status button { width: 88px; height: 27px; margin-left: auto; }
```
